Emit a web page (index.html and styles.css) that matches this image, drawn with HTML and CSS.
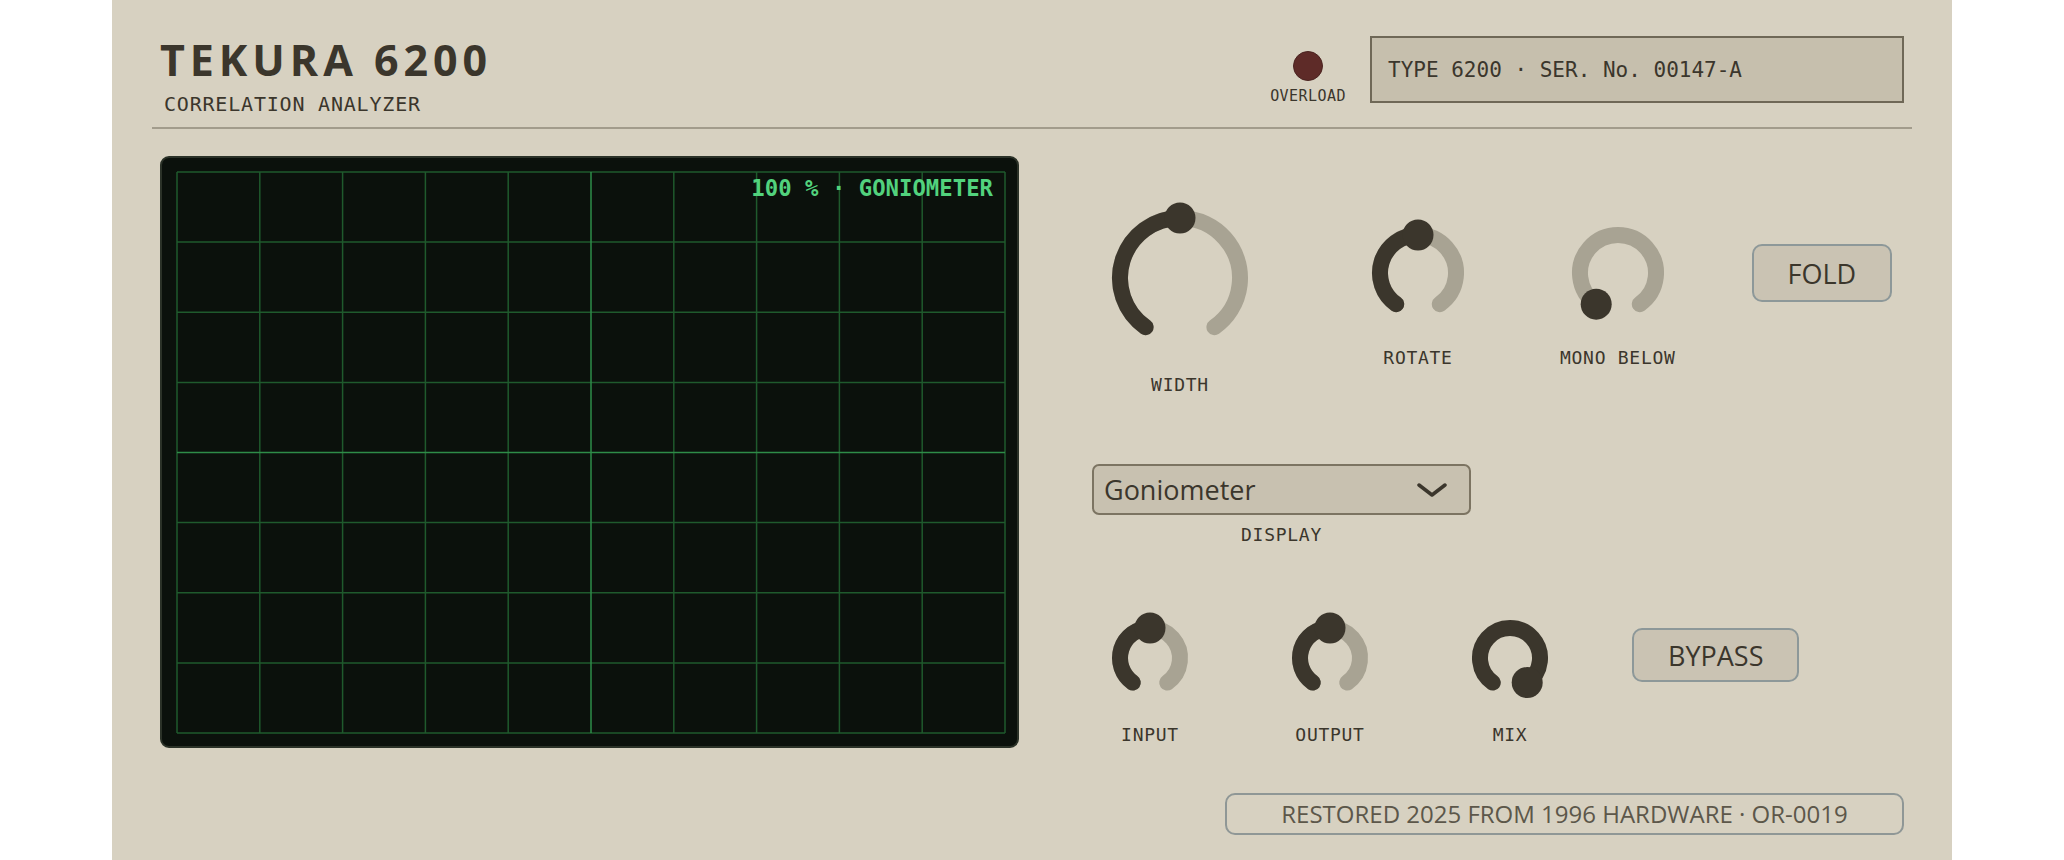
FILE: index.html
```html
<!DOCTYPE html>
<html>
<head>
<meta charset="utf-8">
<title>Tekura 6200</title>
<link rel="stylesheet" href="styles.css">
</head>
<body>
<div class="panel">

  <!-- HEADER -->
  <div class="header">
    <div class="brand">
      <div class="title">TEKURA 6200</div>
      <div class="subtitle">CORRELATION ANALYZER</div>
    </div>
    <div class="header-right">
      <div class="led-group">
        <div class="led"></div>
        <div class="led-label">OVERLOAD</div>
      </div>
      <div class="serial">TYPE 6200 · SER. No. 00147-A</div>
    </div>
  </div>

  <!-- SCOPE AND CONTROLS -->
  <div class="main">
    <div class="scope">
      <svg class="grid" viewBox="0 0 828 561" preserveAspectRatio="none">
        <g class="minor">
          <line x1="0" y1="0" x2="0" y2="561"/>
          <line x1="82.8" y1="0" x2="82.8" y2="561"/>
          <line x1="165.6" y1="0" x2="165.6" y2="561"/>
          <line x1="248.4" y1="0" x2="248.4" y2="561"/>
          <line x1="331.2" y1="0" x2="331.2" y2="561"/>
          <line x1="496.8" y1="0" x2="496.8" y2="561"/>
          <line x1="579.6" y1="0" x2="579.6" y2="561"/>
          <line x1="662.4" y1="0" x2="662.4" y2="561"/>
          <line x1="745.2" y1="0" x2="745.2" y2="561"/>
          <line x1="828" y1="0" x2="828" y2="561"/>
          <line x1="0" y1="0" x2="828" y2="0"/>
          <line x1="0" y1="70.1" x2="828" y2="70.1"/>
          <line x1="0" y1="140.3" x2="828" y2="140.3"/>
          <line x1="0" y1="210.4" x2="828" y2="210.4"/>
          <line x1="0" y1="350.6" x2="828" y2="350.6"/>
          <line x1="0" y1="420.8" x2="828" y2="420.8"/>
          <line x1="0" y1="490.9" x2="828" y2="490.9"/>
          <line x1="0" y1="561" x2="828" y2="561"/>
        </g>
        <g class="axis">
          <line x1="414" y1="0" x2="414" y2="561"/>
          <line x1="0" y1="280.5" x2="828" y2="280.5"/>
        </g>
      </svg>
      <div class="readout">100 % · GONIOMETER</div>
    </div>

    <div class="controls">
      <div class="knob-row top">
        <div class="knob big">
          <svg width="152" height="152" viewBox="0 0 152 152">
            <path class="track" d="M41.59 125.15 A60 60 0 1 1 110.41 125.15"/>
            <path class="value" d="M41.59 125.15 A60 60 0 0 1 76 16"/>
            <circle class="dot" cx="76" cy="16" r="15.5"/>
          </svg>
          <div class="knob-label">WIDTH</div>
        </div>
        <div class="knob medium">
          <svg width="108" height="108" viewBox="0 0 108 108">
            <path class="track" d="M32.2 85.13 A38 38 0 1 1 75.8 85.13"/>
            <path class="value" d="M32.2 85.13 A38 38 0 0 1 54 16"/>
            <circle class="dot" cx="54" cy="16" r="15.5"/>
          </svg>
          <div class="knob-label">ROTATE</div>
        </div>
        <div class="knob medium">
          <svg width="108" height="108" viewBox="0 0 108 108">
            <path class="track" d="M32.2 85.13 A38 38 0 1 1 75.8 85.13"/>
            <circle class="dot" cx="32.2" cy="85.13" r="15.5"/>
          </svg>
          <div class="knob-label">MONO BELOW</div>
        </div>
        <div class="btn fold">FOLD</div>
      </div>

      <div class="select-wrap">
        <div class="select">
          <span>Goniometer</span>
          <svg class="chevron" width="30" height="14" viewBox="0 0 30 14">
            <polyline points="2,2 15,12 28,2"/>
          </svg>
        </div>
        <div class="select-label">DISPLAY</div>
      </div>

      <div class="knob-row bottom">
        <div class="knob small">
          <svg width="92" height="92" viewBox="0 0 92 92">
            <path class="track" d="M28.79 70.58 A30 30 0 1 1 63.21 70.58"/>
            <path class="value" d="M28.79 70.58 A30 30 0 0 1 46 16"/>
            <circle class="dot" cx="46" cy="16" r="15.5"/>
          </svg>
          <div class="knob-label">INPUT</div>
        </div>
        <div class="knob small">
          <svg width="92" height="92" viewBox="0 0 92 92">
            <path class="track" d="M28.79 70.58 A30 30 0 1 1 63.21 70.58"/>
            <path class="value" d="M28.79 70.58 A30 30 0 0 1 46 16"/>
            <circle class="dot" cx="46" cy="16" r="15.5"/>
          </svg>
          <div class="knob-label">OUTPUT</div>
        </div>
        <div class="knob small">
          <svg width="92" height="92" viewBox="0 0 92 92">
            <path class="value" d="M28.79 70.58 A30 30 0 1 1 63.21 70.58"/>
            <circle class="dot" cx="63.21" cy="70.58" r="15.5"/>
          </svg>
          <div class="knob-label">MIX</div>
        </div>
        <div class="btn bypass">BYPASS</div>
      </div>
    </div>
  </div>

  <!-- FOOTER PLATE -->
  <div class="footer-row">
    <div class="plate">RESTORED 2025 FROM 1996 HARDWARE · OR-0019</div>
  </div>
</div>
</body>
</html>
```

FILE: styles.css
```css
body {
    margin: 0;
    background: #ffffff;
    font-family: "Open Sans", "Noto Sans", sans-serif;
    color: #3b362c;
}

.panel {
    width: 1840px;
    margin: 0 auto;
    padding: 0 40px 40px;
    box-sizing: border-box;
    background: #d7d1c1;
}

/* header */
.header {
    display: flex;
    justify-content: space-between;
    align-items: flex-start;
    padding: 36px 8px 11px;
    border-bottom: 2px solid #a29c8c;
}

.title {
    font-weight: 700;
    font-size: 43px;
    line-height: 47px;
    letter-spacing: 0.115em;
}

.subtitle {
    font-family: "DejaVu Sans Mono", monospace;
    font-size: 20px;
    line-height: 24px;
    letter-spacing: 0.04em;
    margin: 9px 0 0 4px;
}

.header-right {
    display: flex;
    align-items: flex-start;
    gap: 24px;
}

.led-group {
    display: flex;
    flex-direction: column;
    align-items: center;
    margin-top: 15px;
}

.led {
    width: 30px;
    height: 30px;
    box-sizing: border-box;
    border-radius: 50%;
    background: #5e2b28;
    border: 1px solid #4b2421;
}

.led-label {
    font-family: "DejaVu Sans Mono", monospace;
    font-size: 15px;
    line-height: 18px;
    letter-spacing: 0.03em;
    margin-top: 6px;
}

.serial {
    width: 534px;
    height: 67px;
    box-sizing: border-box;
    display: flex;
    align-items: center;
    padding-left: 16px;
    border: 2px solid #6f6857;
    background: #c6bfad;
    font-family: "DejaVu Sans Mono", monospace;
    font-size: 21px;
}

/* main area */
.main {
    display: flex;
    gap: 73px;
    margin-top: 27px;
    padding: 0 8px;
}

.scope {
    position: relative;
    width: 859px;
    height: 592px;
    flex-shrink: 0;
    box-sizing: border-box;
    padding: 14px 12px 13px 15px;
    border: 2px solid #2b3228;
    border-radius: 9px;
    background: #0b110c;
}

.grid {
    display: block;
    width: 100%;
    height: 100%;
    overflow: visible;
}

.grid line {
    stroke-width: 1.5;
}

.grid .minor line {
    stroke: #1f5a2d;
}

.grid .axis line {
    stroke: #2e8c48;
}

.readout {
    position: absolute;
    top: 17px;
    right: 24px;
    font-family: "DejaVu Sans Mono", monospace;
    font-weight: bold;
    font-size: 22.3px;
    line-height: 26px;
    color: #52d27d;
}

.controls {
    flex: 1;
    padding-top: 46px;
}

/* knobs */
.knob-row {
    display: flex;
    align-items: flex-start;
    padding-left: 12px;
}

.knob {
    display: flex;
    flex-direction: column;
    align-items: center;
}

.knob + .knob {
    margin-left: 88px;
}

.knob.big {
    margin-right: 20px;
}

.knob svg {
    display: block;
    overflow: visible;
}

.track {
    fill: none;
    stroke: #a8a393;
    stroke-width: 16;
    stroke-linecap: round;
}

.value {
    fill: none;
    stroke: #3b362c;
    stroke-width: 16;
    stroke-linecap: round;
}

.dot {
    fill: #3b362c;
}

.knob-label,
.select-label {
    font-family: "DejaVu Sans Mono", monospace;
    font-size: 18px;
    line-height: 22px;
    letter-spacing: 0.04em;
    white-space: nowrap;
    margin-top: 20px;
}

.top .knob.medium {
    margin-top: 17px;
}

.btn {
    margin-left: 76px;
    box-sizing: border-box;
    display: flex;
    align-items: center;
    padding: 0 34px;
    border: 2px solid #8d9899;
    border-radius: 10px;
    background: #cac3b3;
    font-size: 27px;
}

.top .btn {
    margin-top: 42px;
    height: 58px;
}

.bottom .btn {
    margin-top: 16px;
    height: 54px;
}

/* display selector */
.select-wrap {
    width: 379px;
    margin-top: 68px;
    display: flex;
    flex-direction: column;
    align-items: center;
}

.select {
    width: 100%;
    height: 51px;
    box-sizing: border-box;
    display: flex;
    justify-content: space-between;
    align-items: center;
    padding: 0 22px 0 10px;
    border: 2px solid #7c7462;
    border-radius: 7px;
    background: #c8c1b0;
    font-size: 27px;
}

.chevron polyline {
    fill: none;
    stroke: #3b362c;
    stroke-width: 3.5;
    stroke-linecap: round;
    stroke-linejoin: round;
}

.select-label {
    margin-top: 9px;
}

.bottom {
    margin-top: 66px;
}

/* footer */
.footer-row {
    display: flex;
    justify-content: flex-end;
    margin-top: 45px;
    padding: 0 8px;
}

.plate {
    width: 679px;
    height: 42px;
    box-sizing: border-box;
    border: 2px solid #8f9796;
    border-radius: 10px;
    text-align: center;
    font-size: 24px;
    line-height: 38px;
    color: #5c574a;
}
```
